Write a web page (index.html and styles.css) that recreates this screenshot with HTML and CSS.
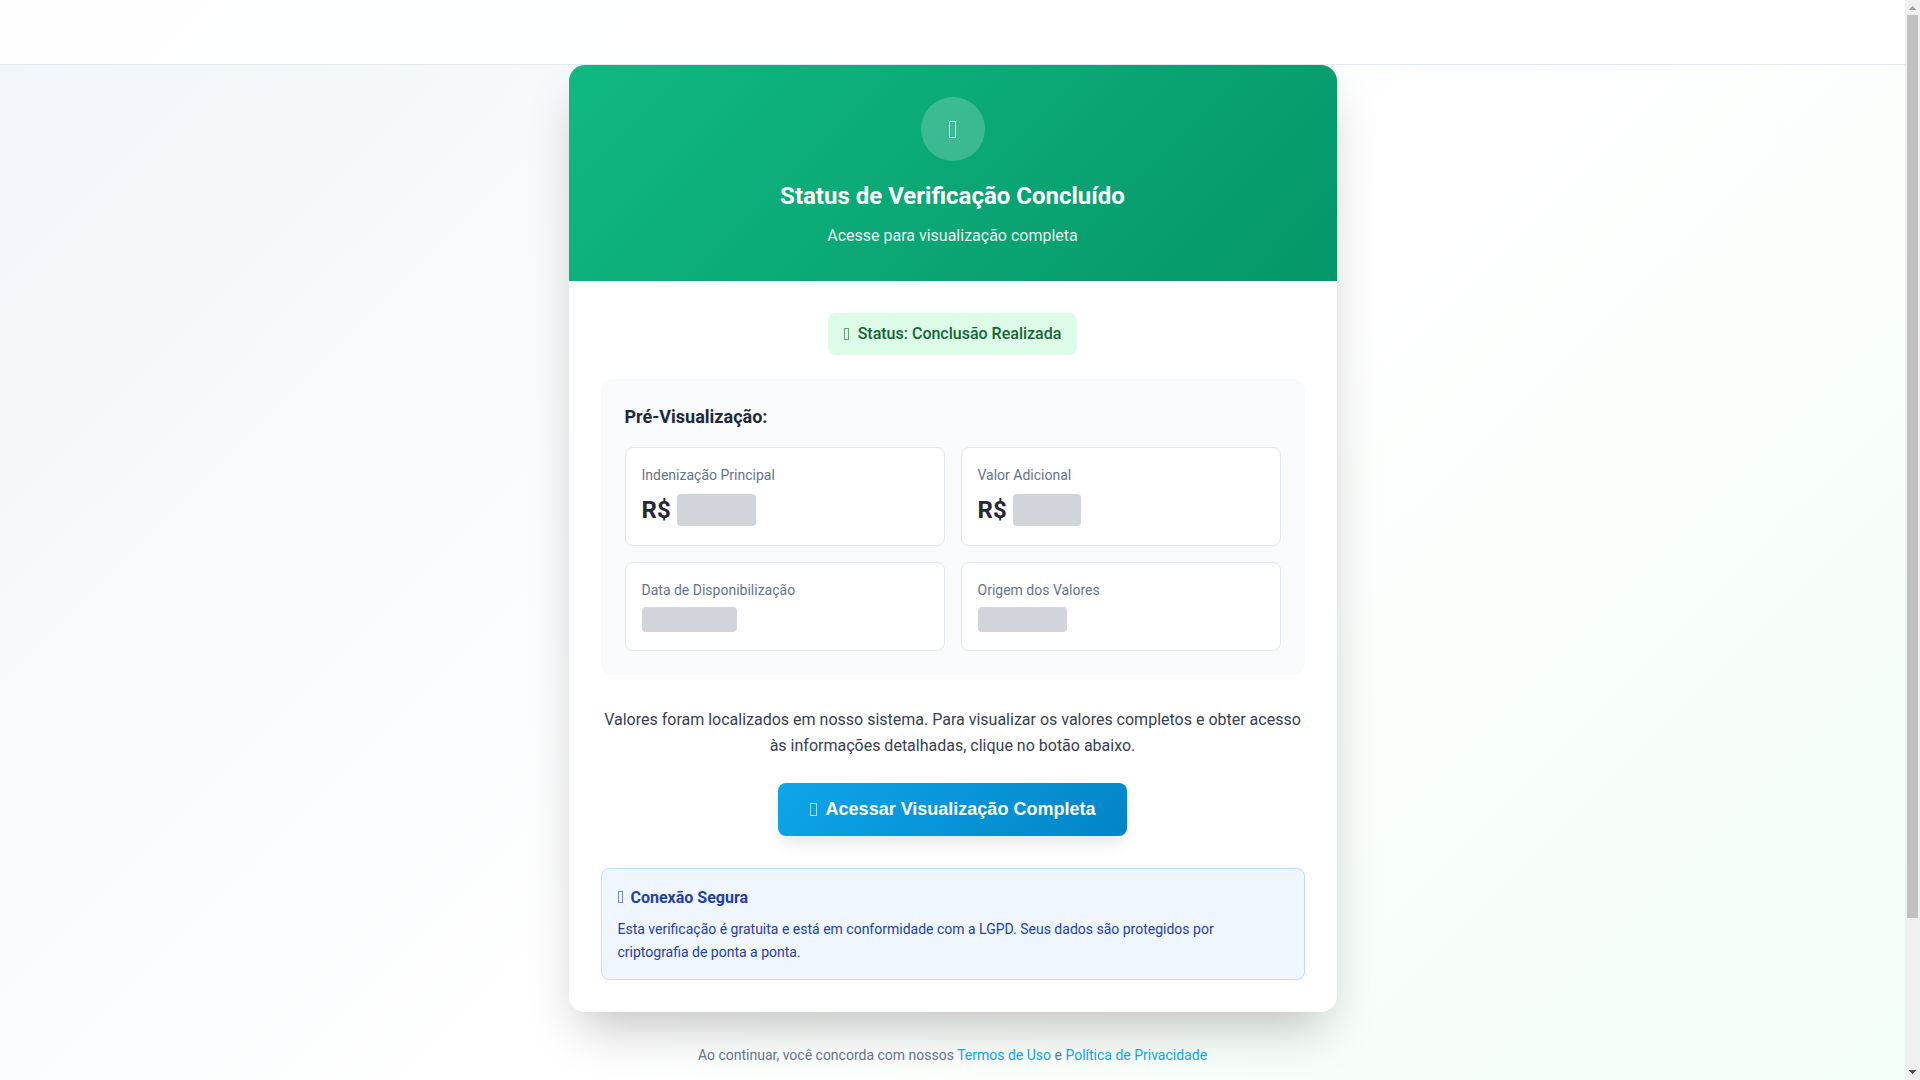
FILE: index.html
```html
<!DOCTYPE html>
<html lang="pt-BR">
<head>
    <meta charset="UTF-8">
    <meta name="viewport" content="width=device-width, initial-scale=1.0">
    <title>Status de Verificação</title>
    <link rel="stylesheet" href="styles.css">
</head>
<body>

<div class="viewport">
    <div class="page">
        <header class="header"></header>

        <main class="container">
            <div class="card">
                <div class="card-header">
                    <div class="success-icon"><i class="icon"></i></div>
                    <h1>Status de Verificação Concluído</h1>
                    <p>Acesse para visualização completa</p>
                </div>

                <div class="card-body">
                    <div class="status-row">
                        <div class="status-badge">
                            <i class="icon"></i>
                            <span>Status: Conclusão Realizada</span>
                        </div>
                    </div>

                    <section class="preview">
                        <h2>Pré-Visualização:</h2>
                        <div class="preview-grid">
                            <div class="preview-item">
                                <div class="preview-label">Indenização Principal</div>
                                <div class="preview-value">R$ <span class="hidden-value value-main"></span></div>
                            </div>
                            <div class="preview-item">
                                <div class="preview-label">Valor Adicional</div>
                                <div class="preview-value">R$ <span class="hidden-value value-extra"></span></div>
                            </div>
                            <div class="preview-item">
                                <div class="preview-label">Data de Disponibilização</div>
                                <div class="preview-value small"><span class="hidden-value value-date"></span></div>
                            </div>
                            <div class="preview-item">
                                <div class="preview-label">Origem dos Valores</div>
                                <div class="preview-value small"><span class="hidden-value value-origin"></span></div>
                            </div>
                        </div>
                    </section>

                    <div class="cta">
                        <p>Valores foram localizados em nosso sistema. Para visualizar os valores completos e obter acesso às informações detalhadas, clique no botão abaixo.</p>
                        <button type="button" class="cta-btn">
                            <i class="icon"></i>
                            <span>Acessar Visualização Completa</span>
                        </button>
                    </div>

                    <div class="security">
                        <div class="security-title">
                            <i class="icon"></i>
                            <span>Conexão Segura</span>
                        </div>
                        <p>Esta verificação é gratuita e está em conformidade com a LGPD. Seus dados são protegidos por criptografia de ponta a ponta.</p>
                    </div>
                </div>
            </div>

            <p class="terms">Ao continuar, você concorda com nossos <a href="#">Termos de Uso</a> e <a href="#">Política de Privacidade</a></p>
        </main>
    </div>
</div>

<div class="scrollbar" aria-hidden="true">
    <svg class="arrow arrow-up" width="15" height="15" viewBox="0 0 15 15" shape-rendering="crispEdges"><path d="M4 10V9h1V8h1V7h1V6h1v1h1v1h1v1h1v1z"/></svg>
    <div class="track"><div class="thumb"></div></div>
    <svg class="arrow" width="15" height="15" viewBox="0 0 15 15" shape-rendering="crispEdges"><path d="M4 5v1h1v1h1v1h1v1h1V8h1V7h1V6h1V5z"/></svg>
</div>

</body>
</html>
```
FILE: styles.css
```css
* {
    margin: 0;
    padding: 0;
    box-sizing: border-box;
}

body {
    display: flex;
    height: 100vh;
    overflow: hidden;
    font-family: Roboto, sans-serif;
    line-height: 1.6;
    color: #1e293b;
}

/* Scrolling area, the bar beside it is drawn by hand */
.viewport {
    flex: 1;
    overflow-y: auto;
    scrollbar-width: none;
}

.page {
    min-height: 100%;
    background: linear-gradient(135deg, #f1f5f9 0%, #ffffff 50%, #f0fdf4 100%);
}

.scrollbar {
    display: flex;
    flex-direction: column;
    width: 15px;
    background: #f0f0f0;
}

.arrow {
    display: block;
    fill: #505050;
}

.arrow-up {
    fill: #a3a3a3;
}

.track {
    flex: 1;
    padding: 0 2px;
}

.thumb {
    height: 86%;
    background: #c1c1c1;
}

/* Header */
.header {
    position: sticky;
    top: 0;
    z-index: 10;
    height: 65px;
    background: rgba(255, 255, 255, 0.9);
    border-bottom: 1px solid #e2e8f0;
}

.container {
    max-width: 768px;
    margin: 0 auto;
    padding-bottom: 188px;
}

/* Outlined box used as the icon */
.icon {
    display: block;
    width: 5px;
    height: 12px;
    border: 1px solid currentColor;
    opacity: 0.6;
}

/* Card */
.card {
    background: #fff;
    border-radius: 16px;
    box-shadow: 0 25px 50px -12px rgba(0, 0, 0, 0.25);
    overflow: hidden;
}

.card-header {
    background: linear-gradient(135deg, #10b981, #059669);
    color: #fff;
    padding: 32px;
    text-align: center;
}

.success-icon {
    display: flex;
    align-items: center;
    justify-content: center;
    width: 64px;
    height: 64px;
    margin: 0 auto 16px;
    border-radius: 50%;
    background: rgba(255, 255, 255, 0.2);
}

.success-icon .icon {
    width: 7px;
    height: 17px;
    opacity: 0.9;
}

.card-header h1 {
    font-size: 24px;
    font-weight: 700;
    margin-bottom: 8px;
}

.card-header p {
    opacity: 0.9;
}

.card-body {
    padding: 32px;
}

.status-row {
    display: flex;
    justify-content: center;
    margin-bottom: 24px;
}

.status-badge {
    display: flex;
    align-items: center;
    gap: 9px;
    padding: 8px 16px;
    border-radius: 8px;
    background: #dcfce7;
    color: #166534;
    font-weight: 500;
}

/* Preview */
.preview {
    background: #f8fafc;
    border-radius: 12px;
    padding: 24px;
    margin-bottom: 32px;
}

.preview h2 {
    font-size: 18px;
    font-weight: 700;
    margin-bottom: 16px;
}

.preview-grid {
    display: grid;
    grid-template-columns: 1fr 1fr;
    gap: 16px;
}

.preview-item {
    background: #fff;
    border: 1px solid #e2e8f0;
    border-radius: 8px;
    padding: 16px;
}

.preview-label {
    font-size: 14px;
    color: #64748b;
    margin-bottom: 4px;
}

.preview-value {
    display: flex;
    align-items: center;
    gap: 6px;
    font-size: 24px;
    font-weight: 700;
}

.preview-value.small {
    min-height: 28px;
}

.hidden-value {
    height: 32px;
    border-radius: 4px;
    background: #d1d5db;
}

.small .hidden-value {
    height: 25px;
}

.value-main {
    width: 79px;
}

.value-extra {
    width: 68px;
}

.value-date {
    width: 95px;
}

.value-origin {
    width: 89px;
}

/* Call to action */
.cta {
    text-align: center;
    margin-bottom: 32px;
}

.cta p {
    line-height: 26px;
    color: #374151;
    margin-bottom: 24px;
}

.cta-btn {
    display: inline-flex;
    align-items: center;
    gap: 9px;
    vertical-align: top;
    padding: 16px 32px;
    border: none;
    border-radius: 8px;
    background: linear-gradient(135deg, #0ea5e9, #0284c7);
    color: #fff;
    font-family: "Liberation Sans", Arial, sans-serif;
    font-size: 18px;
    font-weight: 600;
    cursor: pointer;
    box-shadow: 0 10px 15px -3px rgba(0, 0, 0, 0.1);
}

.cta-btn .icon {
    width: 7px;
    height: 13px;
}

.cta-btn:hover {
    background: linear-gradient(135deg, #0284c7, #0369a1);
}

/* Security notice */
.security {
    background: #eff6ff;
    border: 1px solid #bfdbfe;
    border-radius: 8px;
    padding: 16px;
    color: #1e40af;
}

.security-title {
    display: flex;
    align-items: center;
    gap: 8px;
    font-weight: 700;
    margin-bottom: 8px;
}

.security p {
    font-size: 14px;
}

.terms {
    margin-top: 32px;
    text-align: center;
    font-size: 14px;
    color: #64748b;
}

.terms a {
    color: #0ea5e9;
    text-decoration: none;
}

.terms a:hover {
    text-decoration: underline;
}
```
